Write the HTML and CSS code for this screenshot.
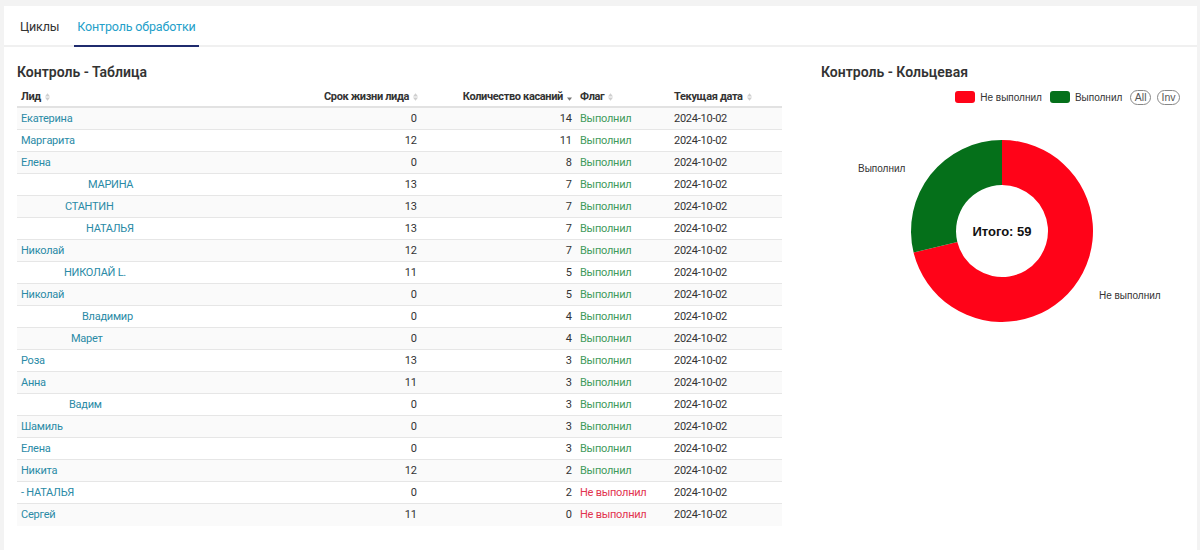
FILE: index.html
```html
<!DOCTYPE html>
<html lang="ru">
<head>
<meta charset="utf-8">
<title>Контроль обработки</title>
<link rel="stylesheet" href="styles.css">
</head>
<body>
<div class="card">
  <nav class="tabs">
    <span class="tab">Циклы</span>
    <span class="tab active">Контроль обработки</span>
  </nav>
  <div class="content">
    <section class="left">
      <h2 class="title">Контроль - Таблица</h2>
      <table class="grid">
        <colgroup>
          <col class="c1"><col class="c2"><col class="c3"><col class="c4"><col class="c5">
        </colgroup>
        <thead>
          <tr>
            <th class="tl">Лид<svg class="sort" viewBox="0 0 6 9"><path d="M0 4 3 0 6 4Z"/><path d="M0 5 6 5 3 9Z"/></svg></th>
            <th class="tr">Срок жизни лида<svg class="sort" viewBox="0 0 6 9"><path d="M0 4 3 0 6 4Z"/><path d="M0 5 6 5 3 9Z"/></svg></th>
            <th class="tr">Количество касаний<svg class="sort on" viewBox="0 0 6 9"><path d="M0 5 6 5 3 9Z"/></svg></th>
            <th class="tl">Флаг<svg class="sort" viewBox="0 0 6 9"><path d="M0 4 3 0 6 4Z"/><path d="M0 5 6 5 3 9Z"/></svg></th>
            <th class="tl">Текущая дата<svg class="sort" viewBox="0 0 6 9"><path d="M0 4 3 0 6 4Z"/><path d="M0 5 6 5 3 9Z"/></svg></th>
          </tr>
        </thead>
        <tbody>
          <tr><td class="name">Екатерина</td><td class="num">0</td><td class="num">14</td><td class="ok">Выполнил</td><td>2024-10-02</td></tr>
          <tr><td class="name">Маргарита</td><td class="num">12</td><td class="num">11</td><td class="ok">Выполнил</td><td>2024-10-02</td></tr>
          <tr><td class="name">Елена</td><td class="num">0</td><td class="num">8</td><td class="ok">Выполнил</td><td>2024-10-02</td></tr>
          <tr><td class="name"><span class="mask m67"></span>МАРИНА</td><td class="num">13</td><td class="num">7</td><td class="ok">Выполнил</td><td>2024-10-02</td></tr>
          <tr><td class="name"><span class="mask m44"></span>СТАНТИН</td><td class="num">13</td><td class="num">7</td><td class="ok">Выполнил</td><td>2024-10-02</td></tr>
          <tr><td class="name"><span class="mask m65"></span>НАТАЛЬЯ</td><td class="num">13</td><td class="num">7</td><td class="ok">Выполнил</td><td>2024-10-02</td></tr>
          <tr><td class="name">Николай</td><td class="num">12</td><td class="num">7</td><td class="ok">Выполнил</td><td>2024-10-02</td></tr>
          <tr><td class="name"><span class="mask m43"></span>НИКОЛАЙ L.</td><td class="num">11</td><td class="num">5</td><td class="ok">Выполнил</td><td>2024-10-02</td></tr>
          <tr><td class="name">Николай</td><td class="num">0</td><td class="num">5</td><td class="ok">Выполнил</td><td>2024-10-02</td></tr>
          <tr><td class="name"><span class="mask m61"></span>Владимир</td><td class="num">0</td><td class="num">4</td><td class="ok">Выполнил</td><td>2024-10-02</td></tr>
          <tr><td class="name"><span class="mask m50"></span>Марет</td><td class="num">0</td><td class="num">4</td><td class="ok">Выполнил</td><td>2024-10-02</td></tr>
          <tr><td class="name">Роза</td><td class="num">13</td><td class="num">3</td><td class="ok">Выполнил</td><td>2024-10-02</td></tr>
          <tr><td class="name">Анна</td><td class="num">11</td><td class="num">3</td><td class="ok">Выполнил</td><td>2024-10-02</td></tr>
          <tr><td class="name"><span class="mask m48"></span>Вадим</td><td class="num">0</td><td class="num">3</td><td class="ok">Выполнил</td><td>2024-10-02</td></tr>
          <tr><td class="name">Шамиль</td><td class="num">0</td><td class="num">3</td><td class="ok">Выполнил</td><td>2024-10-02</td></tr>
          <tr><td class="name">Елена</td><td class="num">0</td><td class="num">3</td><td class="ok">Выполнил</td><td>2024-10-02</td></tr>
          <tr><td class="name">Никита</td><td class="num">12</td><td class="num">2</td><td class="ok">Выполнил</td><td>2024-10-02</td></tr>
          <tr><td class="name">- НАТАЛЬЯ</td><td class="num">0</td><td class="num">2</td><td class="bad">Не выполнил</td><td>2024-10-02</td></tr>
          <tr><td class="name">Сергей</td><td class="num">11</td><td class="num">0</td><td class="bad">Не выполнил</td><td>2024-10-02</td></tr>
        </tbody>
      </table>
    </section>
    <section class="right">
      <h2 class="title">Контроль - Кольцевая</h2>
      <div class="legend">
        <span class="swatch red"></span><span class="lbl">Не выполнил</span>
        <span class="swatch green"></span><span class="lbl">Выполнил</span>
        <span class="pill">All</span>
        <span class="pill">Inv</span>
      </div>
      <svg class="donut" viewBox="0 0 363 220" width="363" height="220">
        <path class="seg-red" d="M181 9 A91 91 0 1 1 92.6 121.6 L136.32 110.92 A46 46 0 1 0 181 54 Z"/>
        <path class="seg-green" d="M92.6 121.6 A91 91 0 0 1 181 9 L181 54 A46 46 0 0 0 136.32 110.92 Z"/>
        <text class="plabel" x="37" y="41">Выполнил</text>
        <text class="plabel" x="278" y="168">Не выполнил</text>
        <text class="total" x="181" y="105" text-anchor="middle">Итого: 59</text>
      </svg>
    </section>
  </div>
</div>
</body>
</html>
```
FILE: styles.css
```css
* { box-sizing: border-box; }

body {
  margin: 0;
  background: #f3f3f3;
  font-family: Roboto, "Liberation Sans", sans-serif;
  color: #333;
}

.card {
  margin: 6px 3px 0 4px;
  background: #fff;
  min-height: 544px;
}

.tabs {
  display: flex;
  gap: 12px;
  height: 41px;
  padding-left: 13px;
  border-bottom: 2px solid #f0f0f0;
}

.tab {
  height: 41px;
  padding: 3px 3px 0;
  line-height: 36px;
  font-size: 12.5px;
  letter-spacing: -0.15px;
  color: #333;
  border-bottom: 2px solid transparent;
  margin-bottom: -2px;
}

.tab.active {
  color: #24a0c9;
  border-bottom-color: #1f2b6e;
}

.content {
  display: flex;
  gap: 39px;
  padding: 16px 13px 0;
}

.left { width: 765px; }
.right { flex: 1; }

.title {
  margin: 0;
  font-size: 14px;
  line-height: 18px;
  font-weight: 600;
  color: #333;
}

.grid {
  margin-top: 6px;
  width: 765px;
  table-layout: fixed;
  border-collapse: collapse;
  font-size: 11px;
}

.c1 { width: 303px; }
.c2 { width: 101px; }
.c3 { width: 155px; }
.c4 { width: 94px; }
.c5 { width: 112px; }

.grid th {
  height: 20px;
  padding: 0 4px;
  font-weight: 700;
  letter-spacing: -0.35px;
  color: #333;
  border-bottom: 2px solid #e2e2e2;
  white-space: nowrap;
}

.grid th.tl { text-align: left; }
.grid th.tr { text-align: right; }

.sort {
  width: 5px;
  height: 8px;
  margin-left: 4px;
  fill: #cfcfcf;
  vertical-align: -1px;
}

.sort.on { fill: #777; }

.grid td {
  height: 22px;
  padding: 0 4px;
  line-height: 21px;
  color: #333;
  letter-spacing: -0.25px;
  border-bottom: 1px solid #e6e6e6;
  white-space: nowrap;
  overflow: hidden;
}

.grid tbody tr:nth-child(odd) td { background: #fafafa; }
.grid tbody tr:last-child td { border-bottom: 0; }

.grid td.num { text-align: right; letter-spacing: 0; }
.grid td.name { color: #2a8aa6; }
.grid td.ok { color: #3f9a5c; }
.grid td.bad { color: #e2344f; }

.mask { display: inline-block; }
.m43 { width: 43px; }
.m44 { width: 44px; }
.m48 { width: 48px; }
.m50 { width: 50px; }
.m61 { width: 61px; }
.m65 { width: 65px; }
.m67 { width: 67px; }

.legend {
  display: flex;
  justify-content: flex-end;
  align-items: center;
  height: 14px;
  margin-top: 9px;
  padding-right: 4px;
  font-family: "Liberation Sans", Arial, sans-serif;
  font-size: 10px;
  color: #333;
}

.swatch {
  width: 20px;
  height: 12px;
  border-radius: 3px;
  margin-right: 5px;
}

.swatch.red { background: #ff0318; }
.swatch.green { background: #05701a; }

.lbl { margin-right: 8px; }

.pill {
  height: 15px;
  padding: 0 3.5px;
  border: 1px solid #888;
  border-radius: 8px;
  font-size: 10.5px;
  line-height: 13px;
  color: #555;
}

.pill + .pill { margin-left: 6px; }

.donut {
  display: block;
  margin-top: 27px;
}

.seg-red { fill: #ff0318; }
.seg-green { fill: #05701a; }

.plabel {
  font-family: "Liberation Sans", Arial, sans-serif;
  font-size: 10px;
  fill: #333;
}

.total {
  font-family: "Liberation Sans", Arial, sans-serif;
  font-size: 13px;
  font-weight: 700;
  fill: #111;
}
```
